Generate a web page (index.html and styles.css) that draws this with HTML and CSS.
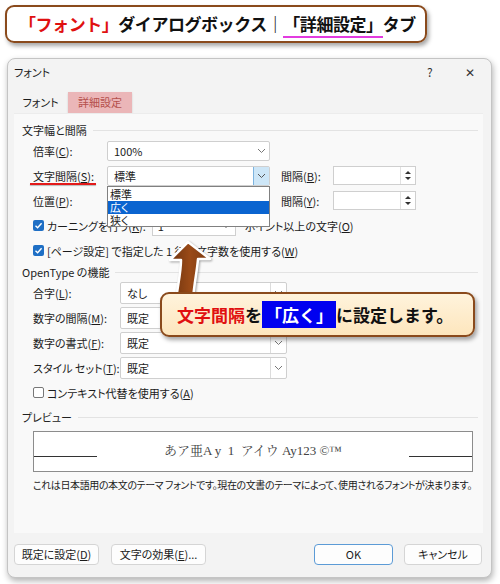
FILE: index.html
```html
<!DOCTYPE html>
<html lang="ja">
<head>
<meta charset="utf-8">
<link rel="stylesheet" href="styles.css">
</head>
<body>
<div class="banner"><span class="red">「フォント」</span>ダイアログボックス｜<span class="ul">「詳細設定」</span>タブ</div>

<div class="dialog">
  <div class="titlebar">
    <span class="title">フォント</span>
    <span class="tb-btns"><span class="help">?</span><span class="close">✕</span></span>
  </div>
  <div class="tabs">
    <div class="tab">フォント</div>
    <div class="tab active">詳細設定</div>
  </div>
  <div class="panel">
    <div class="sec">文字幅と間隔</div>
    <div class="row">
      <span class="lab w1">倍率(<u>C</u>):</span>
      <div class="sel s1"><span class="val">100%</span><span class="arr"><svg width="9" height="6" viewBox="0 0 9 6"><polyline points="1,1 4.5,4.5 8,1" fill="none" stroke="#777" stroke-width="1"/></svg></span></div>
    </div>
    <div class="row">
      <span class="lab w1 redline">文字間隔(<u>S</u>):</span>
      <div class="sel s1 open"><span class="val">標準</span><span class="arr hot"><svg width="9" height="6" viewBox="0 0 9 6"><polyline points="1,1 4.5,4.5 8,1" fill="none" stroke="#555" stroke-width="1"/></svg></span>
        <div class="list">
          <div class="opt">標準</div>
          <div class="opt hi">広く</div>
          <div class="opt">狭く</div>
        </div>
      </div>
      <span class="lab2">間隔(<u>B</u>):</span>
      <div class="spin"><span class="sv"></span><span class="sb"><i class="up"></i><i class="dn"></i></span></div>
    </div>
    <div class="row">
      <span class="lab w1">位置(<u>P</u>):</span>
      <div class="sel s1"><span class="val"></span><span class="arr"></span></div>
      <span class="lab2">間隔(<u>Y</u>):</span>
      <div class="spin"><span class="sv"></span><span class="sb"><i class="up"></i><i class="dn"></i></span></div>
    </div>
    <div class="row">
      <span class="cb on"><svg width="9" height="9" viewBox="0 0 9 9"><polyline points="1.5,4.8 3.6,6.8 7.6,2.2" fill="none" stroke="#fff" stroke-width="1.4"/></svg></span>
      <span class="ctext">カーニングを行う(<u>K</u>):</span>
      <div class="kin"><span class="kv">1</span><span class="kd"></span></div>
      <span class="ctext">ポイント以上の文字(<u>O</u>)</span>
    </div>
    <div class="row">
      <span class="cb on"><svg width="9" height="9" viewBox="0 0 9 9"><polyline points="1.5,4.8 3.6,6.8 7.6,2.2" fill="none" stroke="#fff" stroke-width="1.4"/></svg></span>
      <span class="ctext">[ページ設定] で指定した 1 行の文字数を使用する(<u>W</u>)</span>
    </div>

    <div class="sec s2">OpenType の機能</div>
    <div class="row">
      <span class="lab w2">合字(<u>L</u>):</span>
      <div class="sel s2w"><span class="val">なし</span><span class="arr box"><svg width="9" height="6" viewBox="0 0 9 6"><polyline points="1,1 4.5,4.5 8,1" fill="none" stroke="#777" stroke-width="1"/></svg></span></div>
    </div>
    <div class="row">
      <span class="lab w2">数字の間隔(<u>M</u>):</span>
      <div class="sel s2w"><span class="val">既定</span><span class="arr box"><svg width="9" height="6" viewBox="0 0 9 6"><polyline points="1,1 4.5,4.5 8,1" fill="none" stroke="#777" stroke-width="1"/></svg></span></div>
    </div>
    <div class="row">
      <span class="lab w2">数字の書式(<u>F</u>):</span>
      <div class="sel s2w"><span class="val">既定</span><span class="arr box"><svg width="9" height="6" viewBox="0 0 9 6"><polyline points="1,1 4.5,4.5 8,1" fill="none" stroke="#777" stroke-width="1"/></svg></span></div>
    </div>
    <div class="row">
      <span class="lab w2">スタイル セット(<u>T</u>):</span>
      <div class="sel s2w"><span class="val">既定</span><span class="arr box"><svg width="9" height="6" viewBox="0 0 9 6"><polyline points="1,1 4.5,4.5 8,1" fill="none" stroke="#777" stroke-width="1"/></svg></span></div>
    </div>
    <div class="row">
      <span class="cb off"></span>
      <span class="ctext">コンテキスト代替を使用する(<u>A</u>)</span>
    </div>

    <div class="sec s3">プレビュー</div>
    <div class="preview">
      <span class="pl"></span>
      <span class="ptext">あア亜A y&nbsp; 1&nbsp; アイウ Ay123 ©™</span>
      <span class="pr"></span>
    </div>
    <div class="desc">これは日本語用の本文のテーマ フォントです。現在の文書のテーマによって、使用されるフォントが決まります。</div>
  </div>
  <div class="buttons">
    <div class="btn b1">既定に設定(<u>D</u>)</div>
    <div class="btn b2">文字の効果(<u>E</u>)...</div>
    <div class="spacer"></div>
    <div class="btn ok">OK</div>
    <div class="btn cancel">キャンセル</div>
  </div>
</div>

<svg class="arrow" width="60" height="70" viewBox="160 236 60 70">
  <defs>
    <linearGradient id="ag" x1="0" y1="0" x2="1" y2="0">
      <stop offset="0" stop-color="#6e3410"/>
      <stop offset="0.5" stop-color="#9a4a17"/>
      <stop offset="1" stop-color="#7a3a12"/>
    </linearGradient>
  </defs>
  <path d="M188,242 L210,259 L198,259 C197,272 194,284 193,300 L176,300 C178,284 181,272 181,260 L170,260 Z" fill="url(#ag)" stroke="#fff" stroke-width="2.5" stroke-linejoin="round"/>
</svg>
<div class="callout"><span class="red">文字間隔</span>を<span class="blue">「広く」</span>に設定します。</div>
</body>
</html>
```
FILE: styles.css
```css
* { box-sizing: border-box; }
html, body { margin: 0; padding: 0; }
body {
  width: 500px; height: 584px; background: #fff; position: relative; overflow: hidden;
  font-family: "Noto Sans CJK JP", "Noto Sans", sans-serif;
  color: #1b1b1b;
}
u { text-decoration: underline; text-underline-offset: 1px; }

.banner {
  margin: 5px 0 0 5px; width: 422px; height: 38px;
  border: 2px solid #8a4a1c; border-radius: 9px;
  box-shadow: 2px 3px 4px rgba(0,0,0,0.35);
  font-size: 17px; font-weight: 700; line-height: 34px; letter-spacing: -0.45px;
  padding-left: 12px; white-space: nowrap; color: #111;
}
.banner .red { color: #e01010; }
.banner .ul { display: inline-block; line-height: 24px; border-bottom: 2px solid #e23be0; }

.dialog {
  margin: 15px 0 0 7px; width: 485px; height: 520px;
  background: #f3f3f3; border: 1px solid #c4c4c4; border-radius: 8px;
  box-shadow: 1px 3px 6px rgba(0,0,0,0.3);
  font-size: 11px; font-feature-settings: "palt";
  display: flex; flex-direction: column;
}
.titlebar { height: 33px; display: flex; align-items: flex-start; padding: 6px 0 0 6px; }
.title { font-size: 11px; line-height: 14px; }
.tb-btns { margin-left: auto; display: flex; }
.help { width: 20px; font-size: 12px; line-height: 14px; color: #333; }
.close { width: 44px; text-align: left; padding-left: 18px; font-size: 12px; line-height: 14px; color: #333; }

.tabs { display: flex; height: 21px; padding-left: 6px; }
.tab { width: 53px; text-align: center; line-height: 21px; font-size: 11px; }
.tab.active { width: 64px; margin-left: 1px; background: #ebb6b8; color: #b5504c; box-shadow: 0 1px 2px rgba(0,0,0,0.15); }

.panel {
  margin-left: 6px; width: 469px; height: 420px;
  background: #f9f9f9; border-top: 1px solid #ececec;
  padding: 8px 0 0 19px; position: relative;
}
.sec { display: flex; align-items: center; height: 16px; margin-left: -11px; margin-right: 5px; color: #222; }
.sec::after { content: ""; flex: 1; border-top: 1px solid #e3e3e3; margin-left: 6px; }
.sec.s2 { margin-top: 1px; }
.sec.s3 { margin-top: 4px; }

.row { height: 25px; display: flex; align-items: center; position: relative; }
.lab { flex: none; }
.w1 { width: 74px; }
.w2 { width: 87px; }
.redline { position: relative; }
.redline::after { content: ""; position: absolute; left: -3px; width: 66px; top: 15px; height: 2px; background: #e31a1a; box-shadow: 0 1px 1px rgba(0,0,0,0.25); }
.lab2 { margin-left: 11px; width: 52px; }

.sel {
  height: 20px; background: #fff; border: 1px solid #cfcfcf; border-radius: 2px;
  display: flex; align-items: center; position: relative;
}
.s1 { width: 163px; }
.s2w { width: 167px; height: 22px; }
.val { flex: 1; padding-left: 6px; }
.arr { width: 16px; height: 100%; display: flex; align-items: center; justify-content: center; }
.arr.hot { background: #cde6f7; border-left: 1px solid #7db4e0; }
.arr.box { border-left: 1px solid #dcdcdc; }
.list {
  position: absolute; left: -1px; top: 19px; width: 163px; height: 41px;
  background: #fff; border: 1px solid #808080; z-index: 2; padding-top: 1px;
}
.opt { height: 13px; line-height: 13px; padding-left: 2px; }
.opt.hi { background: #0a64d0; color: #fff; }

.spin { width: 83px; height: 19px; background: #fff; border: 1px solid #cfcfcf; display: flex; }
.sv { flex: 1; }
.sb { width: 15px; border-left: 1px solid #e2e2e2; display: flex; flex-direction: column; align-items: center; justify-content: space-evenly; }
.sb i { width: 0; height: 0; border-left: 3px solid transparent; border-right: 3px solid transparent; }
.sb .up { border-bottom: 3px solid #333; }
.sb .dn { border-top: 3px solid #333; }

.cb { width: 11px; height: 11px; border-radius: 2px; flex: none; display: flex; align-items: center; justify-content: center; margin-right: 3px; }
.cb.on { background: #1f6fc5; }
.cb.off { border: 1px solid #777; background: #fff; }
.ctext { white-space: nowrap; }
.kin { width: 84px; height: 21px; background: #fff; border: 1px solid #cfcfcf; margin: 0 9px 0 6px; display: flex; align-items: center; }
.kv { flex: 1; padding-left: 5px; }
.kd { width: 0; height: 0; border-left: 3px solid transparent; border-right: 3px solid transparent; border-top: 4px solid #333; margin-right: 6px; }

.preview {
  margin-top: 6px; width: 440px; height: 41px; background: #fff; border: 1px solid #8c8c8c;
  display: flex; align-items: center; position: relative;
}
.pl, .pr { position: absolute; top: 24px; width: 63px; border-top: 1px solid #333; }
.pl { left: 0; }
.pr { right: 0; }
.ptext { margin: 0 auto; font-family: "Liberation Serif", "Noto Serif CJK JP", serif; font-size: 13px; color: #444; padding-bottom: 4px; font-feature-settings: normal; }
.desc { margin-top: 5px; line-height: 16px; white-space: nowrap; font-size: 10px; letter-spacing: -0.4px; }

.buttons { display: flex; padding: 11px 0 0 6px; }
.btn { height: 21px; line-height: 19px; text-align: center; background: #fdfdfd; border: 1px solid #d5d5d5; border-radius: 4px; font-size: 11px; }
.b1 { width: 85px; }
.b2 { width: 95px; margin-left: 12px; }
.spacer { flex: 1; }
.ok { width: 79px; border-color: #5c9bd6; }
.cancel { width: 78px; margin-left: 11px; margin-right: 9px; }

.arrow { position: absolute; left: 160px; top: 236px; z-index: 3; filter: drop-shadow(1px 1px 1px rgba(0,0,0,0.35)); }
.callout {
  position: absolute; left: 160px; top: 292px; width: 315px; height: 45px; z-index: 4;
  border: 2px solid #8a4a1c; border-radius: 9px;
  background: linear-gradient(#fff3dc, #fde6bd);
  box-shadow: 2px 3px 4px rgba(0,0,0,0.35);
  font-size: 17px; font-weight: 700; line-height: 41px; padding-left: 15px; white-space: nowrap; color: #111;
}
.callout .red { color: #e01010; }
.callout .blue { background: #0000f0; color: #fff; display: inline-block; line-height: 27px; padding: 0 3px; }
```
